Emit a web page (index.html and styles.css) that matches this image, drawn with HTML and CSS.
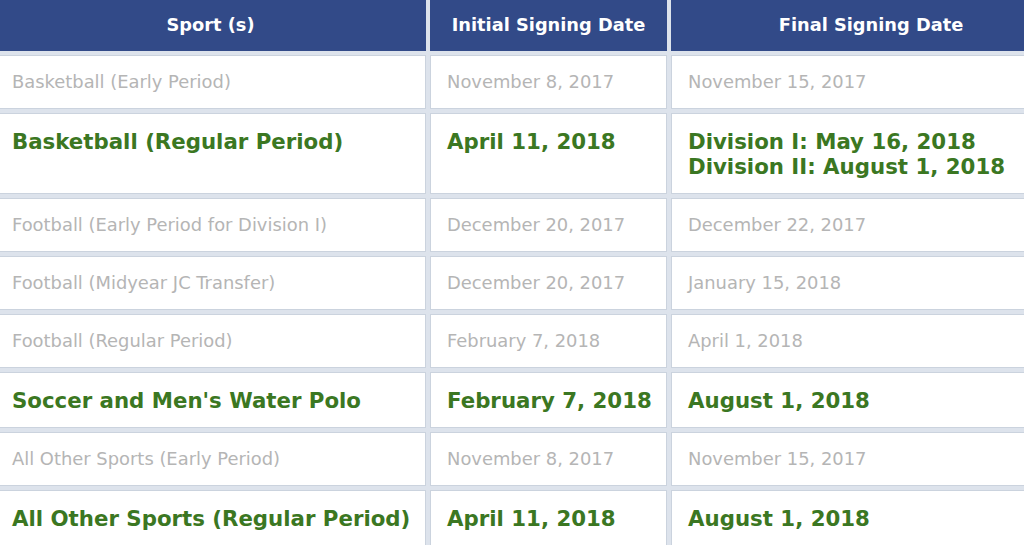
FILE: index.html
```html
<!DOCTYPE html>
<html>
<head>
<meta charset="utf-8">
<link rel="stylesheet" href="styles.css">
</head>
<body>
<table class="dates">
  <colgroup>
    <col class="c-sport">
    <col class="c-init">
    <col class="c-final">
  </colgroup>
  <thead>
    <tr>
      <th>Sport (s)</th>
      <th>Initial Signing Date</th>
      <th>Final Signing Date</th>
    </tr>
  </thead>
  <tbody>
    <tr class="minor">
      <td>Basketball (Early Period)</td>
      <td>November 8, 2017</td>
      <td>November 15, 2017</td>
    </tr>
    <tr class="major">
      <td>Basketball (Regular Period)</td>
      <td>April 11, 2018</td>
      <td>Division I: May 16, 2018<br>Division II: August 1, 2018</td>
    </tr>
    <tr class="minor">
      <td>Football (Early Period for Division I)</td>
      <td>December 20, 2017</td>
      <td>December 22, 2017</td>
    </tr>
    <tr class="minor">
      <td>Football (Midyear JC Transfer)</td>
      <td>December 20, 2017</td>
      <td>January 15, 2018</td>
    </tr>
    <tr class="minor">
      <td>Football (Regular Period)</td>
      <td>February 7, 2018</td>
      <td>April 1, 2018</td>
    </tr>
    <tr class="major">
      <td>Soccer and Men's Water Polo</td>
      <td>February 7, 2018</td>
      <td>August 1, 2018</td>
    </tr>
    <tr class="minor">
      <td>All Other Sports (Early Period)</td>
      <td>November 8, 2017</td>
      <td>November 15, 2017</td>
    </tr>
    <tr class="major">
      <td>All Other Sports (Regular Period)</td>
      <td>April 11, 2018</td>
      <td>August 1, 2018</td>
    </tr>
  </tbody>
</table>
</body>
</html>
```

FILE: styles.css
```css
html, body {
  margin: 0;
  padding: 0;
  background: #ffffff;
  overflow: hidden;
}

.dates {
  table-layout: fixed;
  width: 1084px;
  margin: -4px 0 0 -9px;
  border-collapse: separate;
  border-spacing: 4px;
  background: #dde3ec;
  font-family: "DejaVu Sans", Verdana, sans-serif;
}

.c-sport { width: 431px; }
.c-init { width: 237px; }
.c-final { width: 400px; }

.dates th,
.dates td {
  box-sizing: border-box;
  text-align: left;
  vertical-align: top;
}

.dates th {
  background: #324a88;
  border: 1px solid #324a88;
  color: #ffffff;
  font-size: 17.8px;
  font-weight: bold;
  line-height: 22px;
  padding: 13px 16px 14px;
  text-align: center;
}

.dates td {
  background: #ffffff;
  border: 1px solid #cbd3de;
  padding-left: 16px;
  padding-right: 8px;
  white-space: nowrap;
}

.minor td {
  color: #b5b5b5;
  font-size: 17.9px;
  line-height: 22px;
  padding-top: 15px;
  padding-bottom: 15px;
}

.major td {
  color: #3b7722;
  font-size: 21.3px;
  font-weight: bold;
  line-height: 25px;
  padding-top: 15px;
  padding-bottom: 14px;
}
```
